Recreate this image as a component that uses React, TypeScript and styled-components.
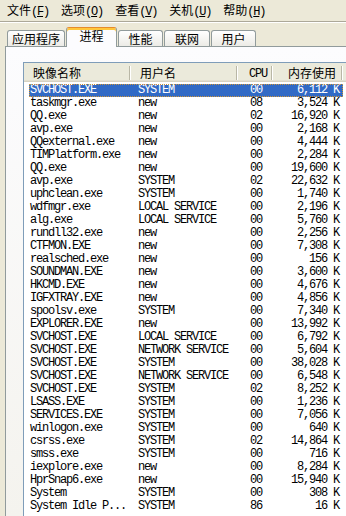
import React from 'react';
import styled, { createGlobalStyle } from 'styled-components';

const CJK = `"Noto Sans CJK SC", "Liberation Sans", sans-serif`;
const MONO = `"Liberation Mono", "Noto Sans CJK SC", monospace`;

const GlobalStyle = createGlobalStyle`
  html, body {
    margin: 0;
    padding: 0;
    background: #ece9d8;
    overflow: hidden;
  }
`;

const menus = [
  { label: '文件', key: 'F' },
  { label: '选项', key: 'O' },
  { label: '查看', key: 'V' },
  { label: '关机', key: 'U' },
  { label: '帮助', key: 'H' },
];

const tabs = [
  { label: '应用程序', width: 58 },
  { label: '进程', width: 51, active: true },
  { label: '性能', width: 45 },
  { label: '联网', width: 46 },
  { label: '用户', width: 45 },
];

// name, user, cpu, mem
const processes: [string, string, string, string][] = [
  ['SVCHOST.EXE', 'SYSTEM', '00', '6,112 K'],
  ['taskmgr.exe', 'new', '08', '3,524 K'],
  ['QQ.exe', 'new', '02', '16,920 K'],
  ['avp.exe', 'new', '00', '2,168 K'],
  ['QQexternal.exe', 'new', '00', '4,444 K'],
  ['TIMPlatform.exe', 'new', '00', '2,284 K'],
  ['QQ.exe', 'new', '00', '19,600 K'],
  ['avp.exe', 'SYSTEM', '02', '22,632 K'],
  ['uphclean.exe', 'SYSTEM', '00', '1,740 K'],
  ['wdfmgr.exe', 'LOCAL SERVICE', '00', '2,196 K'],
  ['alg.exe', 'LOCAL SERVICE', '00', '5,760 K'],
  ['rundll32.exe', 'new', '00', '2,256 K'],
  ['CTFMON.EXE', 'new', '00', '7,308 K'],
  ['realsched.exe', 'new', '00', '156 K'],
  ['SOUNDMAN.EXE', 'new', '00', '3,600 K'],
  ['HKCMD.EXE', 'new', '00', '4,676 K'],
  ['IGFXTRAY.EXE', 'new', '00', '4,856 K'],
  ['spoolsv.exe', 'SYSTEM', '00', '7,340 K'],
  ['EXPLORER.EXE', 'new', '00', '13,992 K'],
  ['SVCHOST.EXE', 'LOCAL SERVICE', '00', '6,792 K'],
  ['SVCHOST.EXE', 'NETWORK SERVICE', '00', '5,604 K'],
  ['SVCHOST.EXE', 'SYSTEM', '00', '38,028 K'],
  ['SVCHOST.EXE', 'NETWORK SERVICE', '00', '6,548 K'],
  ['SVCHOST.EXE', 'SYSTEM', '02', '8,252 K'],
  ['LSASS.EXE', 'SYSTEM', '00', '1,236 K'],
  ['SERVICES.EXE', 'SYSTEM', '00', '7,056 K'],
  ['winlogon.exe', 'SYSTEM', '00', '640 K'],
  ['csrss.exe', 'SYSTEM', '02', '14,864 K'],
  ['smss.exe', 'SYSTEM', '00', '716 K'],
  ['iexplore.exe', 'new', '00', '8,284 K'],
  ['HprSnap6.exe', 'new', '00', '15,940 K'],
  ['System', 'SYSTEM', '00', '308 K'],
  ['System Idle P...', 'SYSTEM', '86', '16 K'],
];

export default function App() {
  return (
    <Window>
      <GlobalStyle />
      <MenuBar>
        {menus.map(m => (
          <MenuItem key={m.key}>
            {m.label}
            <Key>
              (<u>{m.key}</u>)
            </Key>
          </MenuItem>
        ))}
      </MenuBar>
      <TabStrip>
        {tabs.map(t => (
          <Tab key={t.label} $w={t.width} $active={t.active}>
            {t.label}
          </Tab>
        ))}
      </TabStrip>
      <Panel>
        <ListView>
          <Header>
            <HeaderCell $pad={9}>映像名称</HeaderCell>
            <HeaderCell $pad={9}>用户名</HeaderCell>
            <HeaderCell $pad={11} $mono>CPU</HeaderCell>
            <HeaderCell $pad={7} $right>内存使用</HeaderCell>
            <HeaderFill />
          </Header>
          <Rows>
            {processes.map((p, i) => (
              <Row key={i} $selected={i === 0}>
                <NameCell>{p[0]}</NameCell>
                <UserCell>{p[1]}</UserCell>
                <CpuCell>{p[2]}</CpuCell>
                <MemCell>{p[3]}</MemCell>
              </Row>
            ))}
          </Rows>
        </ListView>
      </Panel>
    </Window>
  );
}

const Window = styled.div`
  width: 346px;
  height: 516px;
  overflow: hidden;
  background: #ece9d8;
  display: flex;
  flex-direction: column;
`;

const MenuBar = styled.div`
  display: flex;
  align-items: center;
  height: 21px;
  padding-left: 1px;
  border-bottom: 1px solid #aca899;
  box-shadow: 0 1px 0 #fff;
  font: 12px/14px ${CJK};
  color: #000;
`;

const MenuItem = styled.div`
  padding: 0 6px;
  white-space: nowrap;
`;

const Key = styled.span`
  font-family: ${MONO};
  letter-spacing: -1.2px;
  u {
    text-underline-offset: 1px;
  }
`;

const TabStrip = styled.div`
  display: flex;
  align-items: flex-end;
  gap: 1px;
  height: 20px;
  padding: 5px 0 0 7px;
  margin-bottom: -1px;
  position: relative;
  z-index: 2;
`;

const Tab = styled.div<{ $w: number; $active?: boolean }>`
  box-sizing: border-box;
  width: ${p => p.$w}px;
  height: ${p => (p.$active ? 20 : 16)}px;
  margin-bottom: ${p => (p.$active ? 0 : 1)}px;
  border: 1px solid #919b9c;
  border-bottom: none;
  border-top-color: ${p => (p.$active ? '#e68b2c' : '#919b9c')};
  border-radius: 3px 3px 0 0;
  background: ${p => (p.$active ? '#fcfcfe' : 'linear-gradient(#ffffff, #ecebe6)')};
  box-shadow: ${p => (p.$active ? 'inset 0 2px 0 #ffc73c' : 'none')};
  display: flex;
  align-items: center;
  justify-content: center;
  padding-bottom: ${p => (p.$active ? 3 : 0)}px;
  font: 12px/14px ${CJK};
  color: #000;
  white-space: nowrap;
`;

const Panel = styled.div`
  flex: 1;
  min-width: 0;
  overflow: hidden;
  margin-left: 5px;
  border-top: 1px solid #919b9c;
  border-left: 1px solid #919b9c;
  background: linear-gradient(#fcfcfe, #f4f3ee);
  padding: 15px 0 0 17px;
`;

const ListView = styled.div`
  width: 400px;
  height: 520px;
  border: 1px solid #7f9db9;
  background: #fff;
`;

const Header = styled.div`
  display: grid;
  grid-template-columns: 107px 107px 35px 70px 1fr;
  height: 19px;
  background: #ebeadb;
  box-shadow: inset 0 -1px 0 #d6d2c2, inset 0 -2px 0 #e2dfd0;
  font: 12px/19px ${CJK};
  color: #000;
`;

const HeaderCell = styled.div<{ $pad: number; $right?: boolean; $mono?: boolean }>`
  position: relative;
  padding: ${p => (p.$right ? `0 ${p.$pad}px 0 0` : `0 0 0 ${p.$pad}px`)};
  text-align: ${p => (p.$right ? 'right' : 'left')};
  white-space: nowrap;
  ${p => (p.$mono ? `font-family: ${MONO}; letter-spacing: -1.2px; padding-top: 2px; line-height: 19px;` : '')}
  &::after {
    content: '';
    position: absolute;
    right: 1px;
    top: 3px;
    bottom: 4px;
    width: 1px;
    background: #b9b7a6;
    box-shadow: 1px 0 0 #fff;
  }
`;

const HeaderFill = styled.div``;

const Rows = styled.div`
  padding-top: 2px;
`;

const Row = styled.div<{ $selected?: boolean }>`
  display: grid;
  grid-template-columns: 102px 107px 35px 70px;
  box-sizing: border-box;
  width: 314px;
  height: 13px;
  margin-left: 5px;
  font: 12px/13px ${MONO};
  letter-spacing: -1.2px;
  white-space: pre;
  color: ${p => (p.$selected ? '#fff' : '#000')};
  background: ${p => (p.$selected ? '#316ac5' : 'transparent')};
  outline: ${p => (p.$selected ? '1px dotted #ce953a' : 'none')};
  outline-offset: -1px;
`;

const NameCell = styled.div`
  padding-left: 1px;
`;

const UserCell = styled.div`
  padding-left: 7px;
`;

const CpuCell = styled.div`
  padding-left: 12px;
`;

const MemCell = styled.div`
  padding-right: 4px;
  text-align: right;
`;
